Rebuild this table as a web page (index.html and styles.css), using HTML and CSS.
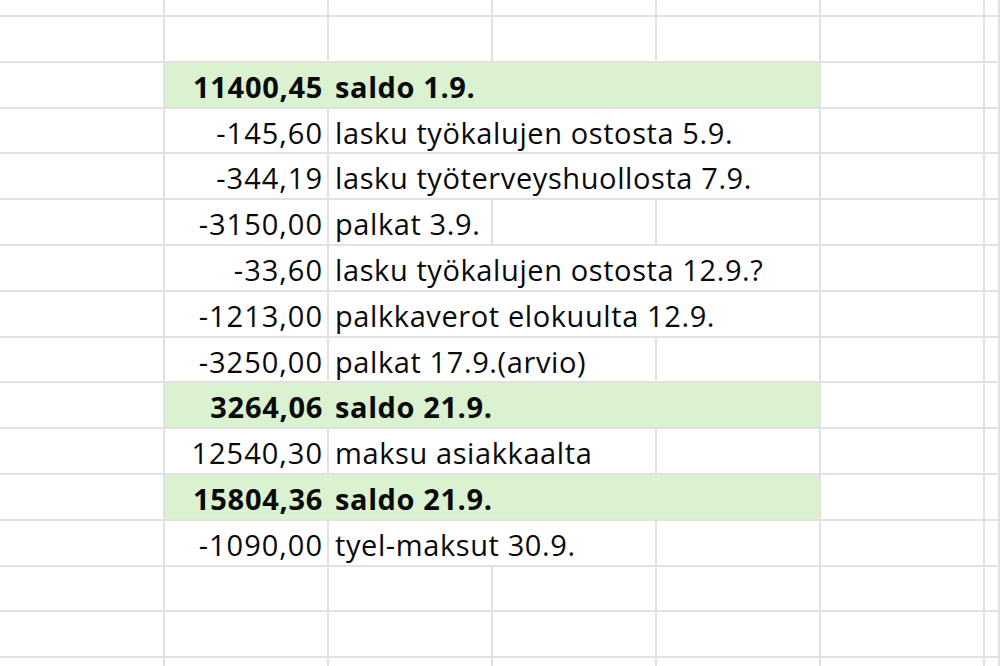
FILE: index.html
```html
<!DOCTYPE html>
<html lang="fi">
<head>
<meta charset="utf-8">
<title>Saldo</title>
<link rel="stylesheet" href="styles.css">
</head>
<body>
<div class="sheet">
  <div class="row row-top"><div class="c"></div><div class="c"></div><div class="c"></div><div class="c"></div><div class="c"></div><div class="c"></div><div class="c"></div></div>
  <div class="row"><div class="c"></div><div class="c"></div><div class="c"></div><div class="c"></div><div class="c"></div><div class="c"></div><div class="c"></div></div>

  <div class="row total"><div class="c"></div><div class="c num">11400,45</div><div class="c txt span3">saldo 1.9.</div><div class="c"></div><div class="c"></div></div>
  <div class="row"><div class="c"></div><div class="c num">-145,60</div><div class="c txt span3">lasku työkalujen ostosta 5.9.</div><div class="c"></div><div class="c"></div></div>
  <div class="row"><div class="c"></div><div class="c num">-344,19</div><div class="c txt span3">lasku työterveyshuollosta 7.9.</div><div class="c"></div><div class="c"></div></div>
  <div class="row"><div class="c"></div><div class="c num">-3150,00</div><div class="c txt">palkat 3.9.</div><div class="c"></div><div class="c"></div><div class="c"></div><div class="c"></div></div>
  <div class="row"><div class="c"></div><div class="c num">-33,60</div><div class="c txt span3">lasku työkalujen ostosta 12.9.?</div><div class="c"></div><div class="c"></div></div>
  <div class="row"><div class="c"></div><div class="c num">-1213,00</div><div class="c txt span3">palkkaverot elokuulta 12.9.</div><div class="c"></div><div class="c"></div></div>
  <div class="row"><div class="c"></div><div class="c num">-3250,00</div><div class="c txt span2">palkat 17.9.(arvio)</div><div class="c"></div><div class="c"></div><div class="c"></div></div>
  <div class="row total"><div class="c"></div><div class="c num">3264,06</div><div class="c txt span3">saldo 21.9.</div><div class="c"></div><div class="c"></div></div>
  <div class="row"><div class="c"></div><div class="c num">12540,30</div><div class="c txt span2">maksu asiakkaalta</div><div class="c"></div><div class="c"></div><div class="c"></div></div>
  <div class="row total"><div class="c"></div><div class="c num">15804,36</div><div class="c txt span3">saldo 21.9.</div><div class="c"></div><div class="c"></div></div>
  <div class="row"><div class="c"></div><div class="c num">-1090,00</div><div class="c txt span2">tyel-maksut 30.9.</div><div class="c"></div><div class="c"></div><div class="c"></div></div>

  <div class="row"><div class="c"></div><div class="c"></div><div class="c"></div><div class="c"></div><div class="c"></div><div class="c"></div><div class="c"></div></div>
  <div class="row"><div class="c"></div><div class="c"></div><div class="c"></div><div class="c"></div><div class="c"></div><div class="c"></div><div class="c"></div></div>
  <div class="row"><div class="c"></div><div class="c"></div><div class="c"></div><div class="c"></div><div class="c"></div><div class="c"></div><div class="c"></div></div>
</div>
</body>
</html>
```

FILE: styles.css
```css
html, body {
  margin: 0;
  padding: 0;
  background: #ffffff;
  overflow: hidden;
}

.sheet {
  width: 1000px;
  height: 666px;
  overflow: hidden;
  font-family: "Open Sans", "Noto Sans", sans-serif;
  font-size: 29px;
  color: #0a0a0a;
}

.row {
  display: grid;
  grid-template-columns: 165px repeat(5, 164px) 1fr;
  height: 45.8px;
}

.row-top {
  height: 17px;
}

.c {
  box-sizing: border-box;
  border-right: 2px solid #e1e1e1;
  border-bottom: 2px solid #e1e1e1;
  padding-top: 5px;
  line-height: 38px;
  white-space: nowrap;
  overflow: hidden;
}

.row-top .c {
  padding-top: 0;
}

.num {
  text-align: right;
  padding-right: 4px;
  letter-spacing: 1px;
}

.txt {
  padding-left: 6px;
  letter-spacing: 0.6px;
}

.span2 {
  grid-column: span 2;
}

.span3 {
  grid-column: span 3;
}

.total .num,
.total .txt {
  background: #daf2d0;
  font-weight: bold;
}

.total .num {
  letter-spacing: 0.7px;
  border-right-color: #daf2d0;
}
```
